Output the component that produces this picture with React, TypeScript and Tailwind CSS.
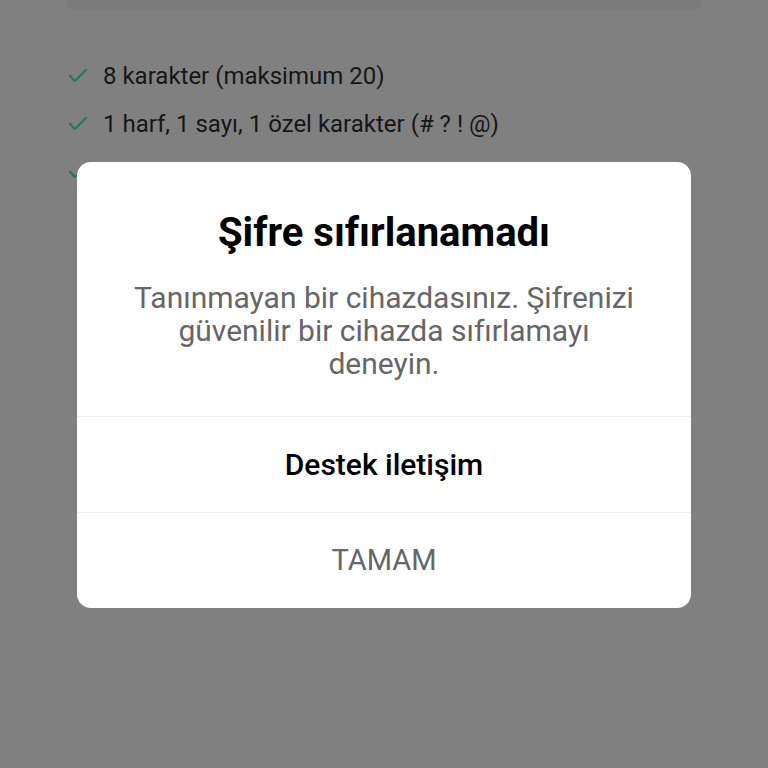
import { Check } from 'lucide-react';

const rules = ['8 karakter (maksimum 20)', '1 harf, 1 sayı, 1 özel karakter (# ? ! @)', 'Güçlü şifre'];

const App = () => {
  return (
    <div className="relative w-full h-[768px] bg-[#808080] overflow-hidden" style={{ fontFamily: 'Roboto, "Noto Sans", sans-serif' }}>
      <div className="mx-[66px] h-[10px] bg-[#7b7b7b] rounded-b-lg"></div>
      <div className="flex flex-col gap-[24px] pl-[66px] pt-[54px]">
        {rules.map((r) => (
          <div key={r} className="flex items-center h-[24px]">
            <Check className="w-[24px] h-[24px] text-[#1f7d5f]" strokeWidth={2.4} />
            <span className="ml-[13px] text-[24px] leading-[24px] text-[#161616]">{r}</span>
          </div>
        ))}
      </div>

      <div className="absolute inset-0 flex justify-center pt-[162px]">
        <div className="w-[614px] h-[446px] bg-white rounded-[14px] flex flex-col">
          <h1 className="pt-[47px] text-center text-[40px] leading-[48px] font-bold text-black">Şifre sıfırlanamadı</h1>
          <p className="mt-[24px] px-[54px] text-center text-[30px] leading-[33px] text-[#666666]">
            Tanınmayan bir cihazdasınız. Şifrenizi güvenilir bir cihazda sıfırlamayı deneyin.
          </p>
          <div className="mt-auto border-t border-[#eeeeee] h-[96px] flex items-center justify-center">
            <span className="text-[30px] font-medium text-black">Destek iletişim</span>
          </div>
          <div className="border-t border-[#eeeeee] h-[96px] flex items-center justify-center">
            <span className="text-[29px] text-[#666666]">TAMAM</span>
          </div>
        </div>
      </div>
    </div>
  );
};

export default App;
